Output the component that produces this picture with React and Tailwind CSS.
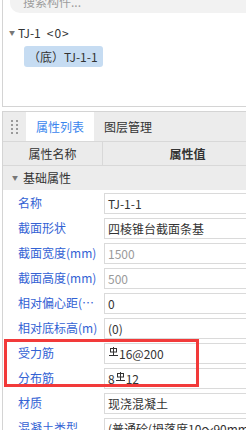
import React from "react";

function RebarMark() {
  return (
    <svg width="9" height="9" viewBox="0 0 9 9" className="mx-[1px] -mt-[4px] shrink-0" fill="none" stroke="#333" strokeWidth="1">
      <rect x="1.5" y="1.5" width="6" height="3.5" />
      <line x1="4.5" y1="0" x2="4.5" y2="8" />
      <line x1="0" y1="8.5" x2="9" y2="8.5" />
    </svg>
  );
}

const rows = [
  { label: "名称", value: "TJ-1-1" },
  { label: "截面形状", value: "四棱锥台截面条基" },
  { label: "截面宽度(mm)", value: "1500", muted: true },
  { label: "截面高度(mm)", value: "500", muted: true },
  { label: "相对偏心距(mm)", value: "0" },
  { label: "相对底标高(m)", value: "(0)" },
  { label: "受力筋", rebar: true, value: "16@200" },
  { label: "分布筋", rebar: true, value: "12", prefix: "8" },
  { label: "材质", value: "现浇混凝土" },
  { label: "混凝土类型", value: "(普通砼(坍落度10～90mm)，碎石粒径40mm)" },
];

function PropRow({ row }) {
  return (
    <div className="flex h-[25px]">
      <div className="w-[100px] shrink-0 pl-[15px] pr-[4px] flex items-center text-[#3362d4]">
        <span className="truncate leading-[16px]">{row.label}</span>
      </div>
      <div className="flex-1 min-w-0 pl-[1px] pt-[3px]">
        <div
          className={`h-[21px] border border-[#dadada] flex items-center pl-[3px] whitespace-nowrap overflow-hidden leading-[16px] ${
            row.muted ? "text-[#9a9a9a]" : "text-[#333]"
          }`}
        >
          {row.prefix}
          {row.rebar && <RebarMark />}
          {row.value}
        </div>
      </div>
    </div>
  );
}

export default function App() {
  return (
    <div className="relative w-[246px] h-[430px] overflow-hidden bg-white text-[12px] leading-[16px] font-['Noto_Sans_CJK_SC',sans-serif] text-[#333]">
      {/* Component tree panel */}
      <div className="flow-root ml-[2px] w-[300px] h-[107px] border-l border-b border-[#d4d4d4]">
        <div className="ml-[7px] -mt-[10px] h-[23px] rounded-[10px] bg-[#f2f2f2] flex items-center pl-[13px] text-[#9d9d9d]">
          搜索构件...
        </div>
        <div className="mt-[12px] flex items-center h-[16px] pl-[6px]">
          <span className="text-[6px] leading-[6px] text-[#777] mr-[3px]">▼</span>
          <span>TJ-1</span>
          <span className="ml-[6px] tracking-[1px]">&lt;0&gt;</span>
        </div>
        <div className="mt-[5px] ml-[21px] w-[79px] h-[21px] rounded-[3px] bg-[#c6dcf2] flex items-center pl-[4px] text-[#333]">
          （底）TJ-1-1
        </div>
      </div>

      {/* Properties panel */}
      <div className="mt-[4px] ml-[2px] w-[270px] border-l border-t border-[#d4d4d4]">
        <div className="flex h-[29px] bg-[#ececec]">
          <div className="w-[23px] flex items-center justify-center">
            <div className="grid grid-cols-2 gap-x-[3px] gap-y-[2px]">
              {Array.from({ length: 8 }).map((_, i) => (
                <span key={i} className="block w-[2px] h-[2px] bg-[#9a9a9a]" />
              ))}
            </div>
          </div>
          <div className="w-[68px] bg-white flex items-center justify-center text-[#3a86ee]">属性列表</div>
          <div className="w-[68px] flex items-center justify-center">图层管理</div>
        </div>

        <div className="flex h-[25px] bg-[#ebebeb] border-t border-b border-[#d8d8d8]">
          <div className="w-[100px] border-r border-[#d8d8d8] flex items-center justify-center">属性名称</div>
          <div className="flex-1 flex items-center justify-center font-bold">属性值</div>
        </div>

        <div className="flex items-center h-[24px] bg-[#ececec] pl-[9px]">
          <span className="text-[6px] leading-[6px] text-[#777] mr-[5px]">▼</span>
          <span>基础属性</span>
        </div>

        {rows.map((row) => (
          <PropRow key={row.label} row={row} />
        ))}
      </div>

      {/* Annotation */}
      <div className="absolute left-[4px] top-[339px] w-[195px] h-[48px] border-[3px] border-[#f23a3a]" />
    </div>
  );
}
